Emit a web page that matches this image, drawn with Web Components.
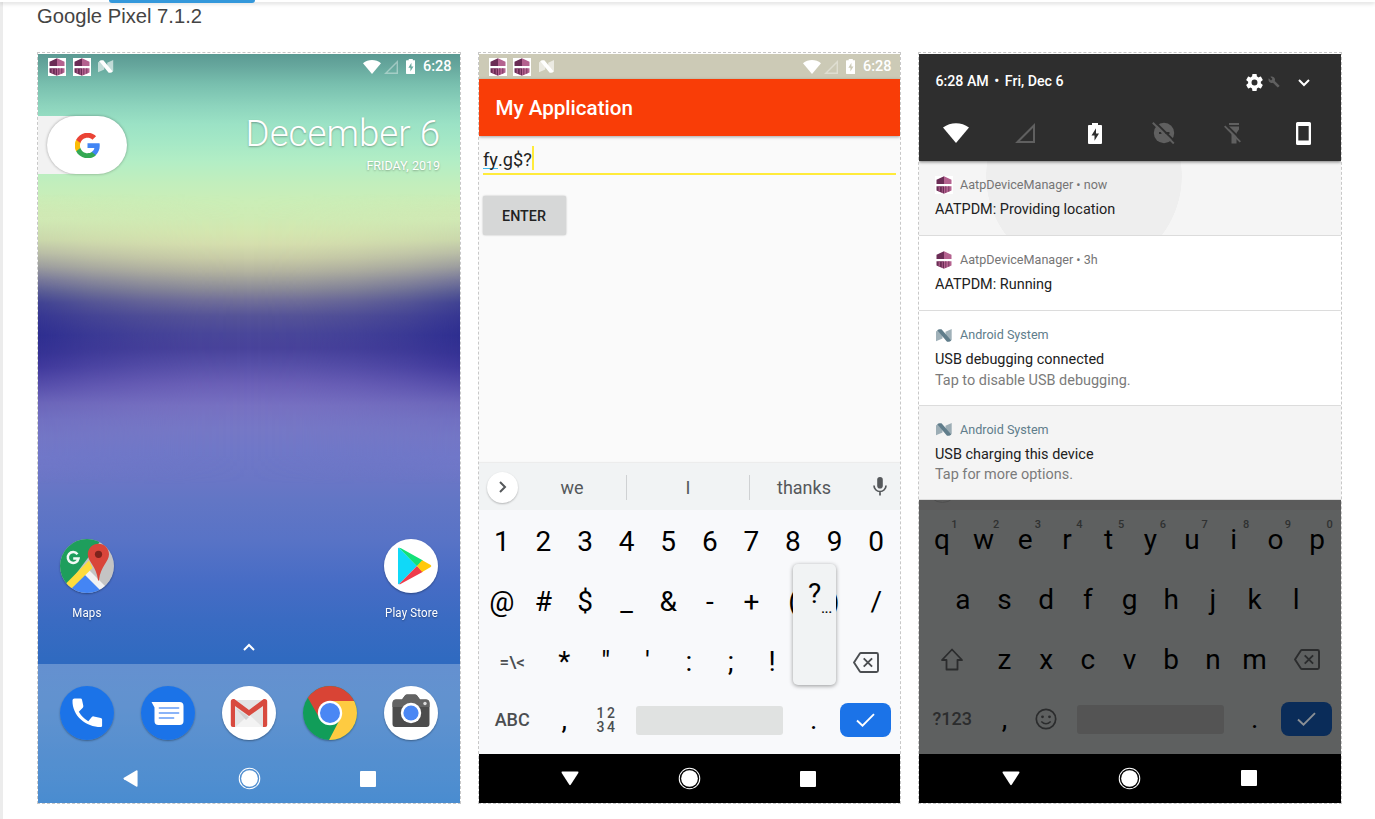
<!DOCTYPE html>
<html lang="en">
<head>
<meta charset="utf-8">
<title>Google Pixel 7.1.2</title>
<style>
html,body{margin:0;height:819px;overflow:hidden;background:#fff}
body{font-family:Roboto,"Liberation Sans",sans-serif}
</style>
</head>
<body>
<device-page>
  <span slot="title">Google Pixel 7.1.2</span>
  <phone-frame style="width:422px"><home-screen></home-screen></phone-frame>
  <phone-frame style="width:421px"><app-screen></app-screen></phone-frame>
  <phone-frame style="width:422px"><shade-screen></shade-screen></phone-frame>
</device-page>
<script>
const define=(name,html)=>{
  const t=document.createElement('template');t.innerHTML=html;
  customElements.define(name,class extends HTMLElement{
    constructor(){super();this.attachShadow({mode:'open'}).append(t.content.cloneNode(true));}
  });
};

const ICONS={
aws:['0 0 18 18','<path fill="#fff" d="M0 0h18v18H0z"/><path fill="#6b2c55" d="M9 .3V8H1.5V3.800zM1.500 10.200H9v7.500l-7.500-3.200z"/><path fill="#b4628f" d="M9 .3l7.500 3.500V8H9zM9 10.200h7.500v4.300L9 17.700z"/><path fill="#a65a86" d="M3.600 10.200h1.300v5.600l-1.300-.5zM6.800 10.200h1v6.900l-1-.4z"/><path fill="#7a3862" d="M10.300 10.200h1v6.400l-1 .4zM13.300 10.200h1v5.200l-1 .4z"/>'],
nought:['0 0 16 13','<path fill="currentColor" opacity=".6" d="M0 2.500L2 1l4.500 5.500V9.500L0 12.300zM9.500 2.800L15.700 0v11l-2 1.300-4.200-5.300z"/><path fill="currentColor" d="M1.300 1.200Q2.300 .3 3.500 .3h2L15.200 11.500Q14 12.700 12.500 12.700H11z"/>'],
wifi:['0 0 26 20','<path fill="currentColor" d="M0 4.500C7.500-1.300 18.500-1.300 26 4.500L13 20z"/>'],
signal:['0 0 20 20','<path fill="none" stroke="currentColor" stroke-width="2" d="M2.500 19H19V2.500z"/>'],
battery:['0 0 14 22','<path fill="currentColor" fill-rule="evenodd" d="M4 0h6v2h3q1 0 1 1v18q0 1-1 1H1q-1 0-1-1V3q0-1 1-1h3zM8 5.500L3.500 13H6.500v5.500L11 11H8z"/>'],
google:['0 0 48 48','<path fill="#4285f4" d="M47.500 24.500c0-1.600-.1-3.200-.4-4.700H24v9h13.200c-.6 3-2.300 5.600-4.900 7.300v6h7.900c4.600-4.300 7.300-10.600 7.300-17.600z"/><path fill="#34a853" d="M24 48.500c6.600 0 12.200-2.200 16.200-5.900l-7.900-6.100c-2.200 1.500-5 2.300-8.300 2.300-6.400 0-11.800-4.300-13.700-10.100H2.200V35C6.200 43 14.500 48.500 24 48.500z"/><path fill="#fbbc05" d="M10.300 28.700a14.500 14.500 0 0 1 0-9.300v-6.300H2.200a24.500 24.500 0 0 0 0 22z"/><path fill="#ea4335" d="M24 9.300c3.600 0 6.800 1.200 9.400 3.700l7-7C36.200 2 30.600-.5 24-.5 14.500-.5 6.200 5 2.200 13.100l8.100 6.300C12.200 13.600 17.600 9.300 24 9.300z"/>'],
maps:['0 0 54 54','<defs><clipPath id="c"><circle cx="27" cy="27" r="27"/></clipPath></defs><g clip-path="url(#c)"><path fill="#c4c4c4" d="M0 0h54v54H0z"/><path fill="#1e9e5c" d="M0 0h42L7 47H0z"/><path fill="#4485f4" d="M25 34L45 54H5z"/><path fill="#f2f2f2" d="M28.500 30.500L48 50l-4.500 4.500L24 35z"/><path fill="#ffdc3c" d="M29 21.500l3.500 7.500L9 52l-5-5.500z"/></g><path fill="#d9453a" d="M38.500 4.800c-6 0-10.700 4.700-10.700 10.500 0 7.500 8.700 12 10.200 25.700.1.900.9.900 1 0C40.500 27.300 49 22.800 49 15.300 49 9.500 44.400 4.800 38.500 4.800z"/><circle cx="38.500" cy="15.300" r="3.600" fill="#7d231c"/><path fill="none" stroke="#f4faf6" stroke-width="2.500" d="M17.500 15.200A5.400 5.400 0 1 0 18.500 19.500H13.200"/>'],
play:['0 0 54 54','<circle cx="27" cy="27" r="27" fill="#fff"/><path fill="#10d9f8" d="M14 9.500v35q0 1 1.300 .5L33 27 15.300 9q-1.300-.5-1.300 .5z"/><path fill="#13e078" d="M15 8.700q.8-.2 2 .5L39 21.500 33 27.200z"/><path fill="#ef3b4b" d="M15 45.300q.8 .2 2-.5L39 32.700 33 27z"/><path fill="#ffc90b" d="M38.200 21.200l8.500 4.800q1.300 1 0 2L38.200 33 33 27z"/>'],
phone:['0 0 54 54','<circle cx="27" cy="27" r="27" fill="#1b73e8"/><path fill="#fff" d="M14.500 12.500h6q1.300 0 1.500 1.300l1.300 6q.2 1.200-.5 2l-4 4q3.500 6 9.500 9.500l3.500-4.300q.8-.9 2-.6l7 1.500q1.300 .3 1.300 1.500v6.300q0 1.300-1.300 1.300C26 41 12 30 12.500 14.200q0-1.700 2-1.700z"/>'],
msgs:['0 0 54 54','<circle cx="27" cy="27" r="27" fill="#1b73e8"/><path fill="#fff" d="M10.500 16H38.500q4 0 4 4V35q0 4-4 4H17.500q-4 0-4-4V21.500z"/><path stroke="#8ab4f8" stroke-width="1.800" stroke-linecap="round" d="M18.500 22H37.500M18.500 27H37.500M18.500 32H32.500"/>'],
gmail:['0 0 54 54','<circle cx="27" cy="27" r="27" fill="#fff"/><path fill="#e4e4e4" d="M11 14h32v27H11z"/><path fill="#f3f3f3" d="M13.500 41L27 28.500 40.500 41z"/><path fill="#d2d2d2" d="M13.500 22L27 31 24 34z"/><path fill="#d84a3f" d="M8.800 15.500q0-2.500 2.500-2.500h1L27 24 41.700 13h1q2.500 0 2.500 2.500V39q0 2-2 2H41V20L27 30 13 20v21h-2.200q-2 0-2-2z"/>'],
chrome:['0 0 54 54','<defs><clipPath id="c"><circle cx="27" cy="27" r="27"/></clipPath></defs><g clip-path="url(#c)"><path fill="#119d59" d="M0 0h54v54H0z"/><path fill="#fecb41" d="M27 15h27v39H26L37 33z"/><path fill="#d94435" d="M5 12L0 0h54v15H27L15.500 30.500z"/></g><circle cx="27" cy="27" r="12.200" fill="#fff"/><circle cx="27" cy="27" r="10" fill="#4a87f4"/>'],
camera:['0 0 54 54','<circle cx="27" cy="27" r="27" fill="#fff"/><path fill="#4c4c4c" d="M8.500 17.500q0-4 3.500-4h6l3-4q.8-1 2-1h8q1.200 0 2 1l3 4h6q3.500 0 3.500 4V38q0 3-3 3h-31q-3 0-3-3z"/><path fill="#636363" d="M8.500 17.500q0-4 3.500-4h6l3-4q.8-1 2-1h8q1.200 0 2 1l3 4h6q3.500 0 3.500 4V21h-37z"/><circle cx="27" cy="27" r="10.200" fill="#fff"/><circle cx="27" cy="27" r="7.600" fill="#4a87f4"/><circle cx="41" cy="17.500" r="1.700" fill="#ddd"/>'],
up:['0 0 12 8','<path fill="none" stroke="currentColor" stroke-width="2" d="M1 7l5-5 5 5"/>'],
right:['0 0 8 12','<path fill="none" stroke="currentColor" stroke-width="2" d="M1 1l5 5-5 5"/>'],
mic:['0 0 14 19','<rect x="4.200" y="0" width="5.600" height="11.500" rx="2.800" fill="currentColor"/><path fill="none" stroke="currentColor" stroke-width="1.700" d="M1 8.500a6 6 0 0 0 12 0M7 14.500V18.500"/>'],
erase:['0 0 26 21','<path fill="none" stroke="currentColor" stroke-width="1.900" stroke-linejoin="round" d="M8 1H23.500q1.500 0 1.500 1.500v16q0 1.500-1.500 1.500H8Q7.200 20 6.700 19.200L1 10.500 6.700 1.800Q7.200 1 8 1z"/><path stroke="currentColor" stroke-width="1.900" d="M10.700 6.300l8.400 8.400M19.100 6.300l-8.400 8.400"/>'],
shift:['0 0 24 23','<path fill="none" stroke="currentColor" stroke-width="1.800" stroke-linejoin="round" d="M12 1.500L22 12H17.500v9.500h-11V12H2z"/>'],
smile:['0 0 22 22','<circle cx="11" cy="11" r="9.700" fill="none" stroke="currentColor" stroke-width="1.700"/><circle cx="7.500" cy="8.800" r="1.400" fill="currentColor"/><circle cx="14.500" cy="8.800" r="1.400" fill="currentColor"/><path fill="none" stroke="currentColor" stroke-width="1.600" d="M6.300 13.500Q11 18 15.700 13.500"/>'],
check:['0 0 19 14','<path fill="none" stroke="currentColor" stroke-width="1.900" d="M1 7.500l5.500 5.200L18 1.200"/>'],
back:['0 0 16 17','<path fill="currentColor" d="M14 .5q1.500-.7 1.500 .8v14.400q0 1.500-1.500 .8L1 9.200q-1-.7 0-1.400z"/>'],
hide:['0 0 18 16','<path fill="currentColor" d="M.7 2Q0 .5 1.500 .5h15q1.500 0 .8 1.500L9.700 14.700q-.7 1-1.400 0z"/>'],
home:['0 0 24 24','<circle cx="12" cy="12" r="8.700" fill="currentColor"/><circle cx="12" cy="12" r="10.700" fill="none" stroke="currentColor" stroke-width="1.100"/>'],
recent:['0 0 16 16','<rect width="16" height="16" rx="1" fill="currentColor"/>'],
gear:['2 2 20 20','<path fill="currentColor" d="M19.430 12.980c.04-.32.07-.64.07-.98s-.03-.66-.07-.98l2.110-1.650c.19-.15.24-.42.12-.64l-2-3.460c-.12-.22-.39-.3-.61-.22l-2.490 1c-.52-.4-1.080-.73-1.690-.98l-.38-2.650C14.460 2.180 14.250 2 14 2h-4c-.25 0-.46.18-.49.42l-.38 2.650c-.61.25-1.170.59-1.690.98l-2.490-1c-.23-.09-.49 0-.61.22l-2 3.460c-.13.22-.07.49.12.64l2.110 1.650c-.04.32-.07.65-.07.98s.03.66.07.98l-2.110 1.650c-.19.15-.24.42-.12.64l2 3.460c.12.22.39.3.61.22l2.490-1c.52.4 1.080.73 1.690.98l.38 2.650c.03.24.24.42.49.42h4c.25 0 .46-.18.49-.42l.38-2.650c.61-.25 1.170-.59 1.690-.98l2.490 1c.23.09.49 0 .61-.22l2-3.460c.12-.22.07-.49-.12-.64zM12 15.500a3.500 3.500 0 1 1 0-7 3.500 3.500 0 0 1 0 7z"/>'],
wrench:['0 0 24 24','<path fill="currentColor" d="M22.700 19l-9.100-9.100c.9-2.300.4-5-1.500-6.900-2-2-5-2.400-7.400-1.300L9 6 6 9 1.600 4.700C.4 7.100.9 10.100 2.900 12.100c1.900 1.900 4.600 2.400 6.900 1.500l9.100 9.100c.4.4 1 .4 1.400 0l2.300-2.300c.5-.4.5-1.100.1-1.400z"/>'],
down:['0 0 12 8','<path fill="none" stroke="currentColor" stroke-width="2" d="M1 1l5 5 5-5"/>'],
dnd:['0 0 23 22','<circle cx="12" cy="11" r="10.200" fill="currentColor"/><path stroke="#2e2e2e" stroke-width="2" d="M7 11h2.500M13 11h4.500"/><path stroke="#2e2e2e" stroke-width="2" d="M3 0l21 20.500"/><path stroke="currentColor" stroke-width="1.900" d="M.8 .8L21.800 21.500"/>'],
torch:['0 0 17 22','<path fill="currentColor" d="M5 1h10v2H5zM5 4.500h10V7.500l-2.500 3.500v10.500h-5V11L5 7.500z"/><path stroke="#2e2e2e" stroke-width="2" d="M2.300 3l16 16"/><path stroke="currentColor" stroke-width="1.800" d="M.7 4.200L16.300 19.800"/>'],
portrait:['0 0 15 23','<path fill="currentColor" fill-rule="evenodd" d="M1.500 0h12Q15 0 15 1.500v20q0 1.500-1.500 1.500h-12Q0 23 0 21.500v-20Q0 0 1.500 0zM2.300 4v14.500h10.400V4z"/>']
};
customElements.define('ui-icon',class extends HTMLElement{
  constructor(){super();this.attachShadow({mode:'open'});}
  connectedCallback(){
    const [box,body]=ICONS[this.getAttribute('name')];
    const w=this.getAttribute('w'),h=this.getAttribute('h')||w;
    this.shadowRoot.innerHTML=`<style>:host{display:block;flex:none;width:${w}px;height:${h}px}svg{display:block;width:100%;height:100%}</style><svg viewBox="${box}" preserveAspectRatio="none">${body}</svg>`;
  }
});

define('device-page',`<style>
:host{display:block;box-sizing:border-box;height:819px;padding:2px 0 0 37px;background:linear-gradient(90deg,#ececec 3px,#fff 3px);position:relative;overflow:hidden}
.bar{position:absolute;left:0;top:0;width:100%;height:2px;background:#fff;box-shadow:0 1px 4px rgba(0,0,0,.25)}
.tab{position:absolute;left:109px;top:0;width:146px;height:3px;background:#3498db;border-radius:0 0 3px 3px}
h1{margin:0;font:400 20.200px/28px "Liberation Sans",Arial,sans-serif;color:#444;height:50px}
.row{display:flex;gap:17px}
</style><div class="bar"></div><div class="tab"></div><h1><slot name="title"></slot></h1><div class="row"><slot></slot></div>`);

define('phone-frame',`<style>
:host{display:block;height:749px;border:1px dashed #c8c8c8;padding-top:1px;overflow:hidden}
</style><slot></slot>`);

define('status-bar',`<style>
:host{display:flex;align-items:center;height:25px;padding:0 9px 0 10px;color:#fff;box-sizing:border-box}
.sp{flex:1}b{font:500 14.500px/26px Roboto,sans-serif;margin-left:8px;width:28px;white-space:nowrap;position:relative;top:.5px}
</style><ui-icon name="aws" w="18"></ui-icon><ui-icon name="aws" w="18" style="margin-left:6.500px"></ui-icon><ui-icon name="nought" w="15.500" h="13" style="margin-left:7.500px"></ui-icon><span class="sp"></span><ui-icon name="wifi" w="18" h="14"></ui-icon><ui-icon name="signal" w="14" style="margin-left:3px;opacity:.38"></ui-icon><ui-icon name="battery" w="9.500" h="15" style="margin-left:7.500px"></ui-icon><b>6:28</b>`);

customElements.define('nav-bar',class extends HTMLElement{
  constructor(){super();this.attachShadow({mode:'open'});}
  connectedCallback(){
    const k=this.getAttribute('back')||'back';
    this.shadowRoot.innerHTML=`<style>:host{display:flex;justify-content:center;align-items:center;height:49px;color:#fff;box-sizing:border-box;padding-right:1px}span{width:119px;display:flex;justify-content:center}</style>
    <span><ui-icon name="${k}" w="${k=='back'?15:18}" h="${k=='back'?17:15}"></ui-icon></span><span><ui-icon name="home" w="23"></ui-icon></span><span><ui-icon name="recent" w="16"></ui-icon></span>`;
  }
});

define('app-tile',`<style>
:host{display:flex;flex-direction:column;align-items:center;width:81px}
.i{border-radius:50%;box-shadow:0 1px 2px rgba(0,0,0,.35)}
.l{font:400 13.200px/18px Roboto,sans-serif;color:#fff;margin-top:11px;white-space:nowrap;transform:scaleX(.87);letter-spacing:.2px;text-shadow:0 1px 2px rgba(0,0,0,.35)}
</style><div class="i"><slot name="icon"></slot></div><div class="l"><slot></slot></div>`);

define('home-screen',`<style>
:host{display:flex;flex-direction:column;height:749px;position:relative;color:#fff;overflow:hidden;isolation:isolate;
background:linear-gradient(#5b9a93 0,#66a79d 12px,#78bfae 30px,#8dd4bd 52px,#9be2c5 70px,#a5e8c6 88px,#b3eec5 108px,#c1eebd 128px,#cbeeb7 148px,#cfebb4 165px,#d4e7b0 178px,#d5dfae 190px,#c9cda7 204px,#b5b5a0 217px,#8a8a98 236px,#737199 246px,#565498 262px,#4a479a 280px,#49439b 294px,#5750a8 310px,#6c61b8 331px,#7771c2 352px,#7678c6 375px,#7078c8 396px,#6a76c6 425px,#6276c5 446px,#5873c6 486px,#466cc5 530px,#3a6bc2 566px,#2f6ac0 608px,#2b6dbf 650px,#0b65c0 749px)}
.edge{position:absolute;inset:0;z-index:-1;--m:linear-gradient(90deg,#000,rgba(0,0,0,.56) 12.500%,rgba(0,0,0,.25) 25%,rgba(0,0,0,.06) 37.500%,transparent 50%,rgba(0,0,0,.06) 62.500%,rgba(0,0,0,.25) 75%,rgba(0,0,0,.56) 87.500%,#000);background:linear-gradient(rgba(203,238,183,0) 140px,#d0e8b4 166px,#cad7ab 186px,#b9bda6 199px,#9b9c9e 213px,#76779a 226px,#545794 239px,#404293 249px,#363692 263px,#2e2e90 281px,#353294 299px,#40399c 313px,#5850ac 333px,#6b65b9 349px,#7170c1 366px,#7376c5 383px,#7077c8 402px,rgba(106,118,198,0) 430px);-webkit-mask-image:var(--m);mask-image:var(--m)}
.top{display:flex;justify-content:space-between;height:448px;padding:37px 20px 0 0;box-sizing:border-box;margin-bottom:12px}
.back{width:90px;height:58px;background:linear-gradient(90deg,#f2f2f2 38px,transparent 38px);padding-left:9px;box-sizing:border-box}
.pill{width:80px;height:58px;border-radius:29px;background:#fff;box-shadow:0 0 3px rgba(0,0,0,.35);display:flex;align-items:center;justify-content:center}
.date{text-align:right;text-shadow:0 1px 2px rgba(0,0,0,.3)}
.d{font:300 36.700px/44px Roboto,sans-serif;margin-top:-4.500px;white-space:nowrap}
.y{font:400 12.500px/16px Roboto,sans-serif;margin-top:2.500px}
.apps{display:flex;justify-content:space-between;padding:0 8.500px;height:102px}
.up{height:22.500px;display:flex;justify-content:center}
.dock{flex:1;background:rgba(255,255,255,.26);display:flex;flex-direction:column}
.dock .apps{padding-top:22px;height:68.500px}
nav-bar{padding:0}
</style><div class="edge"></div><status-bar></status-bar>
<div class="top"><div class="back"><div class="pill"><ui-icon name="google" w="25"></ui-icon></div></div><div class="date"><div class="d">December 6</div><div class="y">FRIDAY, 2019</div></div></div>
<div class="apps"><app-tile><ui-icon slot="icon" name="maps" w="54"></ui-icon>Maps</app-tile><app-tile><ui-icon slot="icon" name="play" w="54"></ui-icon>Play Store</app-tile></div>
<div class="up"><ui-icon name="up" w="12" h="8" style="margin-top:2px"></ui-icon></div>
<div class="dock"><div class="apps"><app-tile><ui-icon slot="icon" name="phone" w="54"></ui-icon></app-tile><app-tile><ui-icon slot="icon" name="msgs" w="54"></ui-icon></app-tile><app-tile><ui-icon slot="icon" name="gmail" w="54"></ui-icon></app-tile><app-tile><ui-icon slot="icon" name="chrome" w="54"></ui-icon></app-tile><app-tile><ui-icon slot="icon" name="camera" w="54"></ui-icon></app-tile></div><nav-bar></nav-bar></div>`);

define('key-row',`<style>:host{display:flex;justify-content:center;height:60px;padding:0 3px 0 2px}</style><slot></slot>`);

customElements.define('key-cap',class extends HTMLElement{
  constructor(){super();this.attachShadow({mode:'open'});}
  connectedCallback(){
    const h=this.getAttribute('hint');
    this.shadowRoot.innerHTML=`<style>
    :host{display:flex;align-items:center;justify-content:center;width:10%;flex:none;position:relative;font:400 28px/1 Roboto,sans-serif;white-space:nowrap;color:#000}
    :host([wide]){width:15%;color:var(--soft)}
    :host([text]){font-weight:500;font-size:18px}
    :host([sym]){font-weight:500;font-size:17px}
    :host([icon]){color:var(--soft)}
    :host([space]){width:40%}
    :host([space]) div{width:147px;height:29px;border-radius:3px;background:var(--space)}
    :host([enter]) div{width:51px;height:34px;border-radius:8px;background:var(--go);color:var(--tick);display:flex;align-items:center;justify-content:center}
    i{position:absolute;left:calc(50% + 7.500px);width:10px;text-align:center;top:8px;font:500 11px/14px Roboto,sans-serif;color:var(--hint)}
    </style><div><slot></slot></div>${h?`<i>${h}</i>`:''}`;
  }
});

const keys=(s,hints)=>s.split(' ').map((c,i)=>`<key-cap${hints?` hint="${(i+1)%10}"`:''}>${c.replace('&','&amp;')}</key-cap>`).join('');
const wideEnd='<key-cap wide><ui-icon name="erase" w="26" h="21"></ui-icon></key-cap>';
const enter='<key-cap wide enter><ui-icon name="check" w="19" h="14"></ui-icon></key-cap>';

define('symbol-keys',`<style>
:host{display:block;height:244px;background:#f8f9fb;padding-top:2px;box-sizing:border-box;position:relative;--soft:#4b4e51;--space:#e0e2e1;--go:#1b73e8;--tick:#fff}
.pop{position:absolute;left:314px;top:54px;width:43px;height:121px;border-radius:5px;background:#f1f3f4;box-shadow:0 1px 4px rgba(0,0,0,.4);font:400 28px/60px Roboto,sans-serif;text-align:center;color:#000}
.pop small{position:absolute;right:4px;top:35px;font:500 13px/20px Roboto,sans-serif}
.num{font:500 14px/14px Roboto,sans-serif;letter-spacing:2.500px;margin-right:-2.500px;display:block}
</style><key-row>${keys('1 2 3 4 5 6 7 8 9 0')}</key-row><key-row>${keys('@ # $ _ & - + ( ) /')}</key-row>
<key-row><key-cap wide sym>=\\&lt;</key-cap>${keys(`* " ' : ; !`)}<key-cap></key-cap>${wideEnd}</key-row>
<key-row style="height:56px"><key-cap wide text>ABC</key-cap><key-cap>,</key-cap><key-cap icon><span class="num">12<br>34</span></key-cap><key-cap space></key-cap><key-cap>.</key-cap>${enter}</key-row>
<div class="pop">?<small>...</small></div>`);

define('letter-keys',`<style>
:host{display:block;height:244px;background:#5e6060;box-sizing:border-box;--soft:#2b2c2d;--hint:#2f3131;--space:#545454;--go:#0a2c59;--tick:#8a8f95}
</style><key-row>${keys('q w e r t y u i o p',true)}</key-row><key-row>${keys('a s d f g h j k l')}</key-row>
<key-row><key-cap wide><ui-icon name="shift" w="24" h="23"></ui-icon></key-cap>${keys('z x c v b n m')}${wideEnd}</key-row>
<key-row style="height:59px"><key-cap wide text>?123</key-cap><key-cap>,</key-cap><key-cap icon><ui-icon name="smile" w="22"></ui-icon></key-cap><key-cap space></key-cap><key-cap>.</key-cap>${enter}</key-row>`);

define('suggestion-strip',`<style>
:host{display:flex;align-items:center;height:47px;background:#f1f3f4;box-shadow:0 -1px 1px #ececec;color:#55585b;font:400 18px/28px Roboto,sans-serif;padding-left:8px;position:relative}
.c{width:31px;height:31px;border-radius:50%;background:#fff;box-shadow:0 1px 2px rgba(0,0,0,.25);display:flex;align-items:center;justify-content:center;margin-bottom:-1px}
.w{width:108px;text-align:center;padding-top:3px}.w2{width:122px}.v{width:1px;height:25px;background:#cfd1d3;margin-top:2px}
</style><div class="c"><ui-icon name="right" w="8" h="12"></ui-icon></div><div class="w">we</div><div class="v"></div><div class="w w2">I</div><div class="v"></div><div class="w">thanks</div><ui-icon name="mic" w="14" h="19" style="margin-left:15px;margin-top:0"></ui-icon>`);

define('app-screen',`<style>
:host{display:flex;flex-direction:column;height:749px;background:#fafafa;color:#222}
status-bar{background:#cccab6;padding-left:9.500px}
.bar{height:57px;background:#f93d07;color:#fff;font:500 20.600px/58px Roboto,sans-serif;padding-left:16.500px;box-shadow:0 1px 3px rgba(0,0,0,.35)}
.body{flex:1;padding:10px 4px 0 4px}
.in{display:flex;height:27px;border-bottom:2px solid #ffeb3b;font:400 18.200px/28px Roboto,sans-serif;white-space:nowrap}
.in u{text-decoration:none;border-bottom:1.500px solid #3fb8ea;box-sizing:border-box;height:23px}
.in i{width:2px;height:24px;background:#ffeb3b}
.btn{margin-top:21px;margin-left:-.5px;width:83px;height:39px;background:#d6d7d7;border-radius:2px;box-shadow:0 0 2px rgba(0,0,0,.3);font:500 14.300px/40px Roboto,sans-serif;text-align:center}
nav-bar{background:#000}
</style><status-bar></status-bar><div class="bar">My Application</div>
<div class="body"><div class="in"><u>fy</u>.g$?<i></i></div><div class="btn">ENTER</div></div>
<suggestion-strip></suggestion-strip><symbol-keys></symbol-keys><nav-bar back="hide"></nav-bar>`);

define('notice-card',`<style>
:host{display:block;box-sizing:border-box;flex:none;height:75px;padding:14px 16.500px 0 16px;border-bottom:1px solid #dcdcdc;background:#fff;font-family:Roboto,sans-serif}
:host([tall]){height:94.500px}:host([tinted]){background:#f4f4f4}
.h{display:flex;align-items:center;gap:7px;height:20px;font-size:12.600px;line-height:20px;color:#757575}
:host([sys]) .h{color:#607d8b}
.t{font-size:14.450px;line-height:20px;color:#212121;margin-top:5px}
.s{font-size:14.450px;line-height:20px;color:#7b7b7b;margin-top:.5px}
</style><div class="h"><slot name="icon"></slot><span><slot name="app"></slot></span></div><div class="t"><slot></slot></div><div class="s"><slot name="sub"></slot></div>`);

define('shade-screen',`<style>
:host{display:flex;flex-direction:column;height:749px;background:#5b5b5b;position:relative;overflow:hidden}
.qs{height:106.500px;background:#2e2e2e;color:#fff;box-shadow:0 1px 3px rgba(0,0,0,.5);position:relative;flex:none;box-sizing:border-box}
.a{display:flex;align-items:center;padding:15px 31px 0 16.500px;height:26px}
.a b{font:500 14.200px/24px Roboto,sans-serif;flex:1;margin-top:-2px;display:flex;gap:5.500px}
.q{display:grid;grid-template-columns:repeat(6,69.600px);justify-items:center;align-items:center;padding:26px 0 0 2px;height:24px}
.dim{color:#606060}
.first{height:75.500px;padding-top:14.500px;background:radial-gradient(circle 98px at 165px 15px,#eee 97.500px,#f5f5f5 98px)}
.gap{height:9.500px;overflow:hidden;flex:none}
.gap div{width:29px;height:29px;border:1px solid #4f4f4f;border-radius:50%;margin:-28px 0 0 8px}
letter-keys,nav-bar{flex:none}
nav-bar{background:#000;padding:0 1px 0 0}
</style><div class="qs"><div class="a"><b><span>6:28 AM</span><span>•</span><span>Fri, Dec 6</span></b><ui-icon name="gear" w="17"></ui-icon><ui-icon name="wrench" w="12" class="dim" style="margin-left:4.500px"></ui-icon><ui-icon name="down" w="12" h="8" style="margin-left:18.500px;margin-top:2px"></ui-icon></div>
<div class="q"><ui-icon name="wifi" w="26" h="20"></ui-icon><ui-icon name="signal" w="20" class="dim"></ui-icon><ui-icon name="battery" w="14" h="21"></ui-icon><ui-icon name="dnd" w="23" h="22" class="dim" style="margin-left:-2px"></ui-icon><ui-icon name="torch" w="17" h="22" class="dim" style="margin-left:-3px"></ui-icon><ui-icon name="portrait" w="15" h="23"></ui-icon></div></div>
<notice-card class="first"><ui-icon slot="icon" name="aws" w="18"></ui-icon><span slot="app">AatpDeviceManager • now</span>AATPDM: Providing location</notice-card>
<notice-card><ui-icon slot="icon" name="aws" w="18"></ui-icon><span slot="app">AatpDeviceManager • 3h</span>AATPDM: Running</notice-card>
<notice-card tall sys><ui-icon slot="icon" name="nought" w="16" h="13" style="color:#607d8b;margin:0 1px"></ui-icon><span slot="app">Android System</span>USB debugging connected<span slot="sub">Tap to disable USB debugging.</span></notice-card>
<notice-card tall sys tinted><ui-icon slot="icon" name="nought" w="16" h="13" style="color:#607d8b;margin:0 1px"></ui-icon><span slot="app">Android System</span>USB charging this device<span slot="sub">Tap for more options.</span></notice-card>
<div class="gap"><div></div></div><letter-keys></letter-keys><nav-bar back="hide"></nav-bar>`);
</script>
</body>
</html>
